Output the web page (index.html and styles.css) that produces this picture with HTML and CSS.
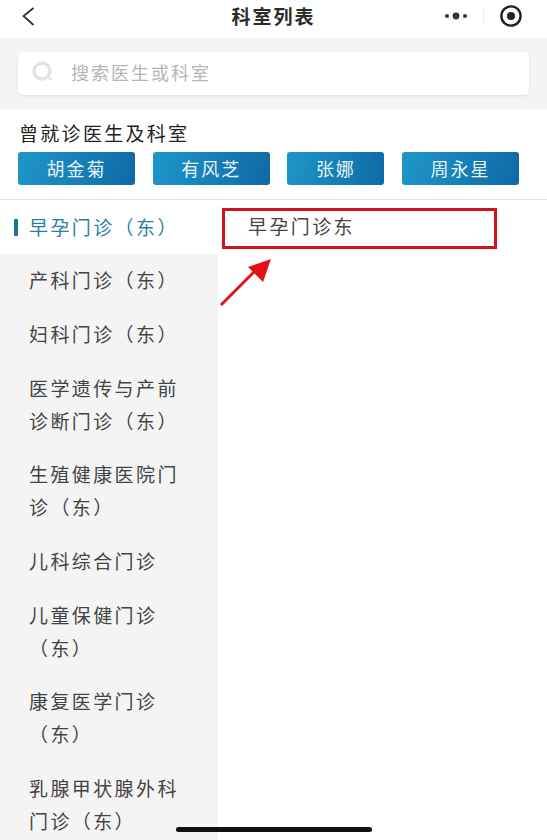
FILE: index.html
```html
<!DOCTYPE html>
<html lang="zh-CN">
<head>
    <meta charset="UTF-8">
    <title>科室列表</title>
    <meta name="viewport" content="width=device-width, initial-scale=1.0">
    <link rel="stylesheet" href="styles.css">
</head>
<body>
    <header class="nav">
        <svg class="nav-back" width="14" height="20" viewBox="0 0 14 20"><path d="M12.5 1 L2.5 9 L12.5 18" fill="none" stroke="#333" stroke-width="1.8"/></svg>
        <h1 class="nav-title">科室列表</h1>
        <div class="nav-tools">
            <svg width="24" height="8" viewBox="0 0 24 8"><circle cx="3" cy="4" r="2" fill="#333"/><circle cx="12" cy="4" r="3.4" fill="#333"/><circle cx="21" cy="4" r="2" fill="#333"/></svg>
            <span class="nav-line"></span>
            <svg width="24" height="24" viewBox="0 0 24 24"><circle cx="12" cy="12" r="9.6" fill="none" stroke="#222" stroke-width="2.4"/><circle cx="12" cy="12" r="4" fill="#222"/></svg>
        </div>
    </header>

    <div class="search-band">
        <div class="search-box">
            <svg width="24" height="22" viewBox="0 0 24 22"><circle cx="11" cy="10" r="8" fill="none" stroke="#e3e3e3" stroke-width="3.4"/><path d="M17 16 L21 19" stroke="#e3e3e3" stroke-width="2.4"/></svg>
            <span class="search-text">搜索医生或科室</span>
        </div>
    </div>

    <section class="recent">
        <h2 class="recent-title">曾就诊医生及科室</h2>
        <div class="recent-list">
            <a class="doctor">胡金菊</a>
            <a class="doctor">有风芝</a>
            <a class="doctor doctor-short">张娜</a>
            <a class="doctor">周永星</a>
        </div>
    </section>

    <div class="dept">
        <ul class="dept-side">
            <li class="dept-item active">早孕门诊（东）</li>
            <li class="dept-item">产科门诊（东）</li>
            <li class="dept-item">妇科门诊（东）</li>
            <li class="dept-item">医学遗传与产前诊断门诊（东）</li>
            <li class="dept-item">生殖健康医院门诊（东）</li>
            <li class="dept-item">儿科综合门诊</li>
            <li class="dept-item">儿童保健门诊（东）</li>
            <li class="dept-item">康复医学门诊（东）</li>
            <li class="dept-item">乳腺甲状腺外科门诊（东）</li>
        </ul>
        <div class="dept-main">
            <div class="sub-item">早孕门诊东</div>
        </div>
        <!-- red markup drawn on top of the screenshot -->
        <div class="mark-box"></div>
        <svg class="mark-arrow" width="56" height="52" viewBox="0 0 56 52"><path d="M2 49 L38 13" stroke="#d9141c" stroke-width="3" fill="none"/><path d="M52 3 L44 26 L29 11 Z" fill="#e3101a"/></svg>
    </div>

    <div class="home-bar"></div>
</body>
</html>
```

FILE: styles.css
```css
* {
    box-sizing: border-box;
}
html, body {
    height: 840px;
    overflow: hidden;
}
body {
    margin: 0;
    background: #fff;
    color: #333;
    font-family: "Noto Sans CJK SC", "Noto Sans", sans-serif;
    position: relative;
}
.nav {
    height: 38px;
    display: flex;
    align-items: flex-start;
    justify-content: center;
    background: #fff;
}
.nav-back {
    position: absolute;
    left: 21px;
    top: 7px;
}
.nav-title {
    margin: 0;
    font-size: 19px;
    font-weight: 700;
    line-height: 32px;
    letter-spacing: 2px;
    color: #2b2b2b;
}
.nav-tools {
    position: absolute;
    right: 24px;
    top: 4px;
    display: flex;
    align-items: center;
    gap: 15px;
}
.nav-line {
    width: 1px;
    height: 18px;
    background: #f0f0f0;
}
.search-band {
    height: 71px;
    padding: 14px 18px 14px;
    background: #f3f4f5;
}
.search-box {
    height: 43px;
    display: flex;
    align-items: center;
    gap: 16px;
    padding: 0 0 3px 13px;
    background: #fff;
    border-radius: 5px;
    box-shadow: 0 1px 3px rgba(0,0,0,0.08);
}
.search-text {
    font-size: 18px;
    letter-spacing: 2px;
    color: #b5b5b5;
}
.recent {
    height: 91px;
    padding: 11px 18px 0;
    border-bottom: 1px solid #dedede;
}
.recent-title {
    margin: 0 0 6px 1px;
    font-size: 19px;
    font-weight: 400;
    line-height: 26px;
    letter-spacing: 2.3px;
    color: #222;
}
.recent-list {
    display: flex;
    gap: 17.7px;
}
.doctor {
    width: 117px;
    height: 33px;
    line-height: 32px;
    text-align: center;
    font-size: 18px;
    letter-spacing: 2px;
    color: #e6f4fb;
    background: linear-gradient(100deg, #1e96c8, #0f6aa6);
    border-radius: 3px;
}
.doctor-short {
    width: 97px;
}
.dept {
    display: flex;
    position: relative;
}
.dept-side {
    width: 218px;
    margin: 0;
    padding: 0;
    list-style: none;
    background: #f4f4f4;
}
.dept-item {
    padding: 10.5px 31px 10.5px 29px;
    font-size: 19px;
    line-height: 32.8px;
    letter-spacing: 2.4px;
    color: #444;
}
.dept-item.active {
    position: relative;
    background: #fff;
    color: #2a7fa8;
}
.dept-item.active::before {
    content: "";
    position: absolute;
    left: 14px;
    top: 19px;
    width: 4px;
    height: 17px;
    border-radius: 1px;
    background: #1f7199;
}
.dept-main {
    flex: 1;
    background: #fff;
}
.sub-item {
    padding: 8.5px 0 12.5px 30px;
    font-size: 19px;
    line-height: 33px;
    letter-spacing: 2.4px;
    color: #444;
}
.mark-box {
    position: absolute;
    left: 222px;
    top: 8px;
    width: 275px;
    height: 41px;
    border: 3px solid #d0141f;
}
.mark-arrow {
    position: absolute;
    left: 219px;
    top: 56px;
}
.home-bar {
    position: absolute;
    left: 176px;
    top: 827px;
    width: 196px;
    height: 5px;
    border-radius: 3px;
    background: #111;
}
```
